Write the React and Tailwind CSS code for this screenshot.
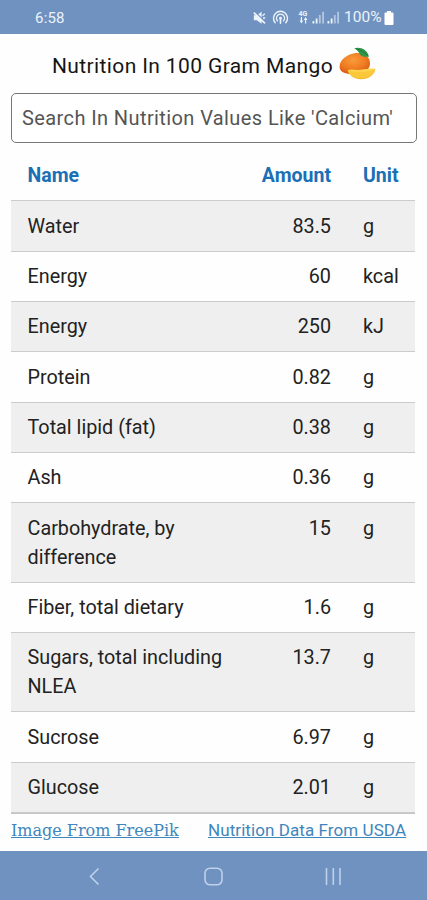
const rows = [
  { name: 'Water', amount: '83.5', unit: 'g' },
  { name: 'Energy', amount: '60', unit: 'kcal' },
  { name: 'Energy', amount: '250', unit: 'kJ' },
  { name: 'Protein', amount: '0.82', unit: 'g' },
  { name: 'Total lipid (fat)', amount: '0.38', unit: 'g' },
  { name: 'Ash', amount: '0.36', unit: 'g' },
  { name: 'Carbohydrate, by difference', amount: '15', unit: 'g' },
  { name: 'Fiber, total dietary', amount: '1.6', unit: 'g' },
  { name: 'Sugars, total including NLEA', amount: '13.7', unit: 'g' },
  { name: 'Sucrose', amount: '6.97', unit: 'g' },
  { name: 'Glucose', amount: '2.01', unit: 'g' },
];

function MuteIcon() {
  return (
    <svg width="13" height="14" viewBox="0 0 13 14" fill="none">
      <path d="M.8 4.300h3L8.600 .8v12L3.800 9.300h-3z" fill="#edf3fa" />
      <path d="M1.800 .8 12.500 11" stroke="#7092c0" strokeWidth="1.200" />
      <path d="M.8 1.600 12 12.400" stroke="#edf3fa" strokeWidth="1.700" />
      <path d="m9.600 4.800 2.200-2M10 7h2.200" stroke="#edf3fa" strokeWidth="1.300" />
    </svg>
  );
}

function HotspotIcon() {
  return (
    <svg width="17" height="15" viewBox="0 0 17 15" fill="none" stroke="#edf3fa" strokeWidth="1.4" strokeLinecap="round">
      <path d="M3.2 12.8a7 7 0 1 1 10.6 0" />
      <path d="M5.5 10.8a4 4 0 1 1 6 0" />
      <circle cx="8.5" cy="8.2" r="1.4" fill="#edf3fa" stroke="none" />
      <path d="M8.5 9v4.3" strokeWidth="1.6" />
    </svg>
  );
}

function DataIcon() {
  return (
    <div className="flex w-[10px] flex-col items-center">
      <span className="text-[7px] leading-[6px] font-bold">4G</span>
      <svg width="9" height="7" viewBox="0 0 9 7" fill="#edf3fa">
        <path d="M1.8 0h1.2v3.5h1.2L2.4 6.5.6 3.5h1.2zM6 6.5h1.2V3h1.2L6.6 0 4.8 3H6z" />
      </svg>
    </div>
  );
}

function SignalIcon() {
  return (
    <svg width="13" height="13" viewBox="0 0 13 13" fill="#edf3fa">
      <path d="M.5 10h1.8v2.5H.5zM3.7 7.6h1.8v4.9H3.7z" />
      <path d="M6.9 4h1.8v8.5H6.9zM10.2 .8H12v11.7h-1.8z" opacity=".55" />
    </svg>
  );
}

function MangoIcon() {
  return (
    <svg width="37" height="33" viewBox="0 0 37 33">
      <defs>
        <radialGradient id="fruit" cx="45%" cy="35%" r="65%">
          <stop offset="0" stopColor="#fb9a3a" />
          <stop offset=".6" stopColor="#ef7d22" />
          <stop offset="1" stopColor="#dc5c16" />
        </radialGradient>
        <linearGradient id="slice" x1="0" y1="0" x2="0" y2="1">
          <stop offset="0" stopColor="#ffdc57" />
          <stop offset="1" stopColor="#f7b32b" />
        </linearGradient>
      </defs>
      <path d="M17 6C10 6.500 .6 12 .6 19.500c0 5.500 5 7.500 12 7.500 11 0 18.700-3 18.400-11C30.800 9 25 5.500 17 6z" fill="url(#fruit)" />
      <path d="M15 1.200C21-.6 28.500 2 30 9.800c-3.200-.2-5.500.5-8-1.300C20 6.800 19.500 3 15 1.200z" fill="#31954a" />
      <path d="M17 1.800c5 1 8.500 3.700 12 7" stroke="#197439" strokeWidth=".9" fill="none" />
      <path d="M8.500 23.300c4-1.800 8 .1 13.500-.5 5-.6 10.500-1.800 14.400-.8-.4 5.500-6.500 10.200-14.400 10.200-7 0-11.500-3.600-13.500-8.900z" fill="url(#slice)" />
      <path d="M8.500 23.300c4 2.500 17 3.300 27.900-1.300-1.500 5.500-7 9.300-14.400 9.300-6.500 0-11-3-13.500-8z" fill="#fcc83b" />
    </svg>
  );
}

export default function App() {
  return (
    <div className="flex h-[900px] w-[427px] flex-col overflow-hidden bg-[#fefefe] font-['Roboto',sans-serif] text-[#222]">
      <header className="flex h-[33.5px] shrink-0 items-center bg-[#7092c0] pt-[2px] pl-[35px] text-[#edf3fa]">
        <span className="w-[218px] text-[15px] tracking-[0.2px]">6:58</span>
        <MuteIcon />
        <span className="ml-[6px]"><HotspotIcon /></span>
        <span className="ml-[9px]"><DataIcon /></span>
        <span className="ml-[4px]"><SignalIcon /></span>
        <span className="ml-[2px]"><SignalIcon /></span>
        <span className="ml-[4px] w-[40px] text-[15.5px] whitespace-nowrap">100%</span>
        <svg width="10" height="14" viewBox="0 0 10 14" fill="#fff">
          <path d="M3 0h4v1.500h1.500a1 1 0 0 1 1 1V13a1 1 0 0 1-1 1h-7a1 1 0 0 1-1-1V2.500a1 1 0 0 1 1-1H3z" />
        </svg>
      </header>

      <main className="flex h-[817.5px] shrink-0 flex-col pr-[11px] pl-[11px]">
        <div className="flex h-[59.5px] shrink-0 items-center pl-[41px]">
          <h1 className="w-[287px] pt-[6px] text-[21px] tracking-[0.38px] whitespace-nowrap text-[#151515]">Nutrition In 100 Gram Mango</h1>
          <MangoIcon />
        </div>
        <input
          className="h-[50px] w-[406px] shrink-0 rounded-[5px] border border-[#777] bg-white pl-[10px] text-[20px] tracking-[0.4px] placeholder:text-[#555] placeholder:opacity-100"
          placeholder="Search In Nutrition Values Like 'Calcium'"
        />
        <section className="mt-[8px] w-[404px] shrink-0 border-b border-[#c4c4c4]">
          <div className="flex h-[50.4px] items-center border-b border-[#cbcbcb] text-[19.5px] font-bold text-[#1a6fb5]">
            <span className="w-[220px] pl-[16.5px]">Name</span>
            <span className="w-[100px] text-right">Amount</span>
            <span className="pl-8">Unit</span>
          </div>
          {rows.map((row, i) => (
            <div
              key={i}
              className="flex border-b border-[#cbcbcb] pt-[10.200px] pb-[10.150px] text-[19.8px] leading-[29px] odd:bg-[#fefefe] even:bg-[#efefef]"
            >
              <span className="w-[230px] pl-[16.5px]">{row.name}</span>
              <span className="w-[90px] text-right">{row.amount}</span>
              <span className="pl-8">{row.unit}</span>
            </div>
          ))}
        </section>
        <footer className="flex shrink-0 items-center pt-[4px] text-[#3f86bd] underline">
          <a className="w-[197px] font-['DejaVu_Serif',serif] text-[16px] whitespace-nowrap">Image From FreePik</a>
          <a className="text-[17px] tracking-[0.08px] whitespace-nowrap">Nutrition Data From USDA</a>
        </footer>
      </main>

      <nav className="flex h-[49px] shrink-0 items-center bg-[#7092c0] pt-[2px] pl-[88px]">
        <svg width="12" height="19" viewBox="0 0 12 19" fill="none" stroke="#bed0ea" strokeWidth="1.600">
          <path d="M10.500 1.500 2.500 9.500l8 8" />
        </svg>
        <svg className="ml-[104px]" width="19" height="19" viewBox="0 0 19 19" fill="none" stroke="#bed0ea" strokeWidth="1.600">
          <rect x="1" y="1.200" width="17" height="16.600" rx="5" />
        </svg>
        <svg className="ml-[101px]" width="19" height="19" viewBox="0 0 19 19" fill="none" stroke="#bed0ea" strokeWidth="1.600">
          <path d="M2.500 1v17M9.300 1v17M16 1v17" />
        </svg>
      </nav>
    </div>
  );
}
